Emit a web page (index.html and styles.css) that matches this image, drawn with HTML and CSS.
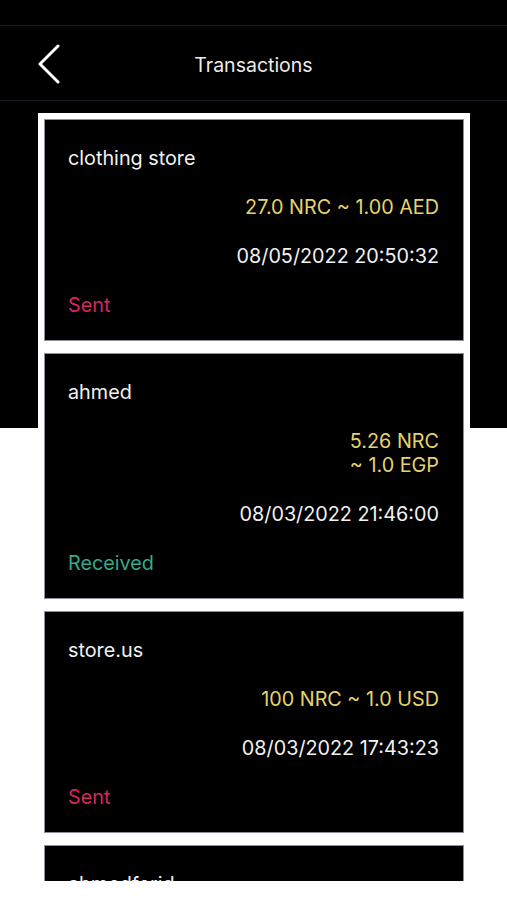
FILE: index.html
```html
<!DOCTYPE html>
<html lang="en">
<head>
<meta charset="utf-8">
<title>Transactions</title>
<link rel="stylesheet" href="styles.css">
</head>
<body>
  <div class="statusbar"></div>
  <header class="navbar">
    <button class="back" aria-label="Back">
      <svg width="24" height="40" viewBox="0 0 24 40">
        <path d="M21 2 L3 20 L21 38" fill="none" stroke="#ffffff" stroke-width="3" stroke-linecap="round" stroke-linejoin="round"/>
      </svg>
    </button>
    <h1 class="title">Transactions</h1>
  </header>
  <main class="viewport">
    <div class="list">
      <article class="card">
        <div class="name">clothing store</div>
        <div class="amount">27.0 NRC ~ 1.00 AED</div>
        <div class="date">08/05/2022 20:50:32</div>
        <div class="status sent">Sent</div>
      </article>
      <article class="card">
        <div class="name">ahmed</div>
        <div class="amount">5.26 NRC<br>~ 1.0 EGP</div>
        <div class="date">08/03/2022 21:46:00</div>
        <div class="status received">Received</div>
      </article>
      <article class="card">
        <div class="name">store.us</div>
        <div class="amount">100 NRC ~ 1.0 USD</div>
        <div class="date">08/03/2022 17:43:23</div>
        <div class="status sent">Sent</div>
      </article>
      <article class="card">
        <div class="name">ahmedferid</div>
        <div class="amount">10 NRC ~ 1.0 USD</div>
        <div class="date">08/02/2022 12:10:05</div>
        <div class="status sent">Sent</div>
      </article>
    </div>
  </main>
</body>
</html>
```
FILE: styles.css
```css
* { box-sizing: border-box; }

html, body {
  margin: 0;
  padding: 0;
}

body {
  width: 507px;
  height: 900px;
  overflow: hidden;
  background: linear-gradient(#000 0, #000 428px, #fff 428px, #fff 100%);
  font-family: "Inter", "Roboto", "Liberation Sans", sans-serif;
  color: #f2f2f2;
}

.statusbar {
  height: 25px;
  background: #000;
}

.navbar {
  height: 76px;
  border-top: 1px solid #1b1c2c;
  border-bottom: 1px solid #1b1c2c;
  background: #000;
  display: flex;
  align-items: center;
  justify-content: center;
  position: relative;
  padding-top: 3px;
}

.back {
  position: absolute;
  left: 36px;
  top: 17px;
  width: 26px;
  height: 42px;
  padding: 0;
  margin: 0;
  border: 0;
  background: none;
  display: flex;
  align-items: center;
  justify-content: center;
}

.title {
  margin: 0;
  font-size: 19.5px;
  font-weight: 400;
  color: #ececec;
  letter-spacing: 0;
}

.viewport {
  height: 780px;
  overflow: hidden;
  padding-top: 12px;
}

.list {
  margin: 0 37px 0 38px;
  background: #fff;
  padding: 6px;
  display: flex;
  flex-direction: column;
  gap: 12px;
}

.card {
  background: #000;
  border: 1px solid #8e8e9c;
  padding: 26px 24px 23px 23px;
  display: flex;
  flex-direction: column;
  gap: 25px;
  font-size: 19.8px;
  line-height: 24px;
}

.name {
  color: #f2f2f2;
}

.amount {
  color: #e6d36c;
  text-align: right;
}

.date {
  color: #f2f2f2;
  text-align: right;
}

.status.sent { color: #d4285f; }
.status.received { color: #34a98a; }
```
